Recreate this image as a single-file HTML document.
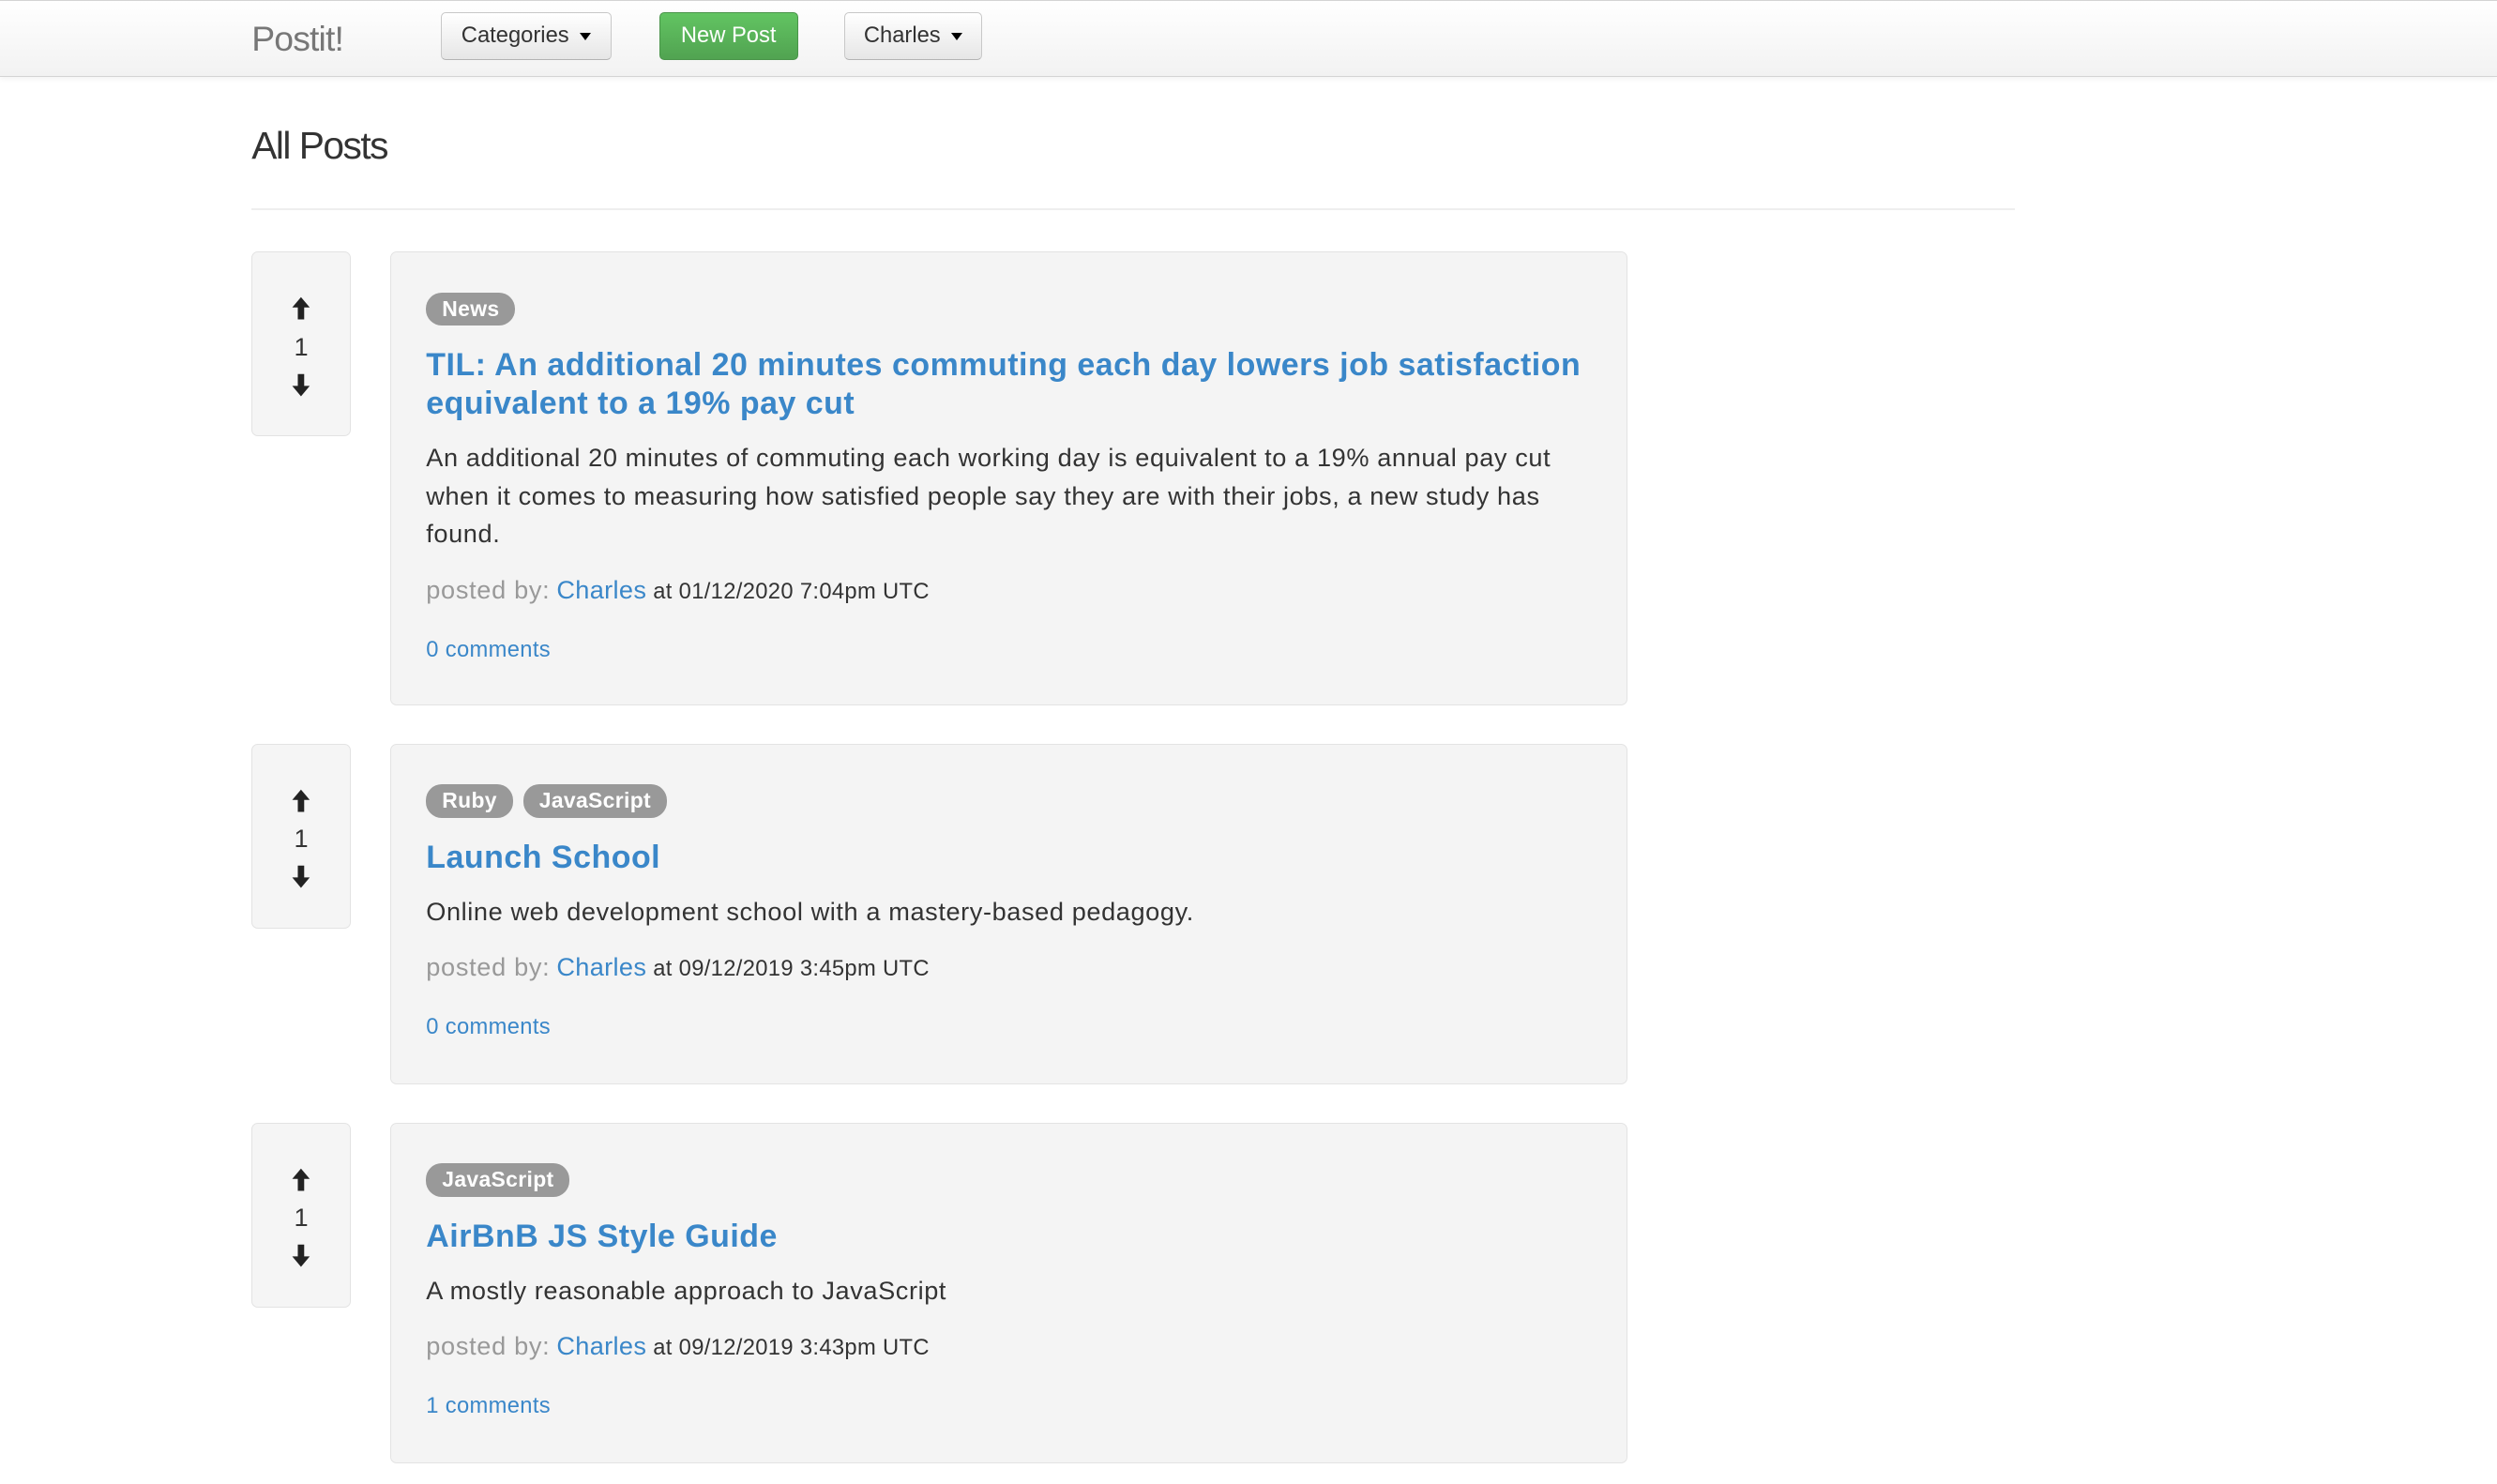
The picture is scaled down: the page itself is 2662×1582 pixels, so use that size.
<!DOCTYPE html>
<html><head><meta charset="utf-8"><style>
html{zoom:1.6977}
body{margin:0;background:#fff;font-family:"Liberation Sans",Arial,sans-serif;color:#333;width:1568px;height:932px;overflow:hidden;position:relative}
.nav{position:absolute;left:0;top:0;width:1568px;height:47px;background:linear-gradient(#fff,#f2f2f2);border-top:1px solid #d4d4d4;border-bottom:1px solid #d4d4d4;box-shadow:0 1px 4px rgba(0,0,0,.07)}
.brand{position:absolute;left:158px;top:11px;font-size:22px;color:#777;letter-spacing:-0.5px}
.btn{position:absolute;top:7px;border:1px solid #c8c8c8;border-bottom-color:#b3b3b3;border-radius:3px;background:linear-gradient(#fff,#e6e6e6);font-size:14px;line-height:28px;text-align:center;color:#333;box-sizing:border-box;height:30px}
.green{background:linear-gradient(#62c462,#51a351);border-color:#4a944a;color:#fff}
.caret{display:inline-block;border-left:4px solid transparent;border-right:4px solid transparent;border-top:5px solid #000;vertical-align:middle;margin-left:3px}
h1{position:absolute;left:158px;top:78px;margin:0;font-size:24px;font-weight:normal;color:#333;letter-spacing:-0.9px}
.hr{position:absolute;left:158px;top:131px;width:1107px;height:1px;background:#eee}
.vote{position:absolute;left:158px;width:61px;height:115px;background:#f5f5f5;border:1px solid #e3e3e3;border-radius:4px;text-align:center}
.vote svg{display:block;margin:0 auto}
.card{position:absolute;left:245px;width:777px;background:#f4f4f4;border:1px solid #e3e3e3;border-radius:4px;box-sizing:border-box;padding:25px 22px 0}
.badge{display:inline-block;background:#999;color:#fff;font-weight:bold;font-size:13.5px;line-height:21px;padding:0 10px;border-radius:10px;margin-right:2px;letter-spacing:.2px}
.title{font-size:20px;font-weight:bold;color:#3a87c9;line-height:24px;margin-top:13px;letter-spacing:.3px}
.body{font-size:16px;line-height:24px;margin-top:10px;letter-spacing:.35px}
.meta{margin-top:11px;font-size:14px;line-height:24px;letter-spacing:.2px}
.meta .g{color:#999;font-size:16px;letter-spacing:.4px}
.meta .l{color:#3a87c9;font-size:16px;letter-spacing:.2px}
.cm{font-size:14px;color:#3a87c9;margin-top:16px;letter-spacing:.2px}
.n{font-size:16px;line-height:16px;margin-top:8px}
</style></head><body>
<div class="nav">
<div class="brand">Postit!</div>
<div class="btn" style="left:277px;width:107px">Categories <span class="caret"></span></div>
<div class="btn green" style="left:414px;width:87px">New Post</div>
<div class="btn" style="left:530px;width:87px">Charles <span class="caret"></span></div>
</div>
<h1>All Posts</h1>
<div class="hr"></div>

<div class="vote" style="top:158px">
<svg width="14" height="16" style="margin-top:27px" viewBox="0 0 14 16"><path d="M7 1L1.5 7.5H5V15H9V7.5H12.5Z" fill="#222"/></svg>
<div class="n">1</div>
<svg width="14" height="16" style="margin-top:8px" viewBox="0 0 14 16"><path d="M7 15L1.5 8.5H5V1H9V8.5H12.5Z" fill="#222"/></svg>
</div>
<div class="card" style="top:158px;height:285px">
<span class="badge">News</span>
<div class="title">TIL: An additional 20 minutes commuting each day lowers job satisfaction equivalent to a 19% pay cut</div>
<div class="body">An additional 20 minutes of commuting each working day is equivalent to a 19% annual pay cut when it comes to measuring how satisfied people say they are with their jobs, a new study has found.</div>
<div class="meta"><span class="g">posted by:</span> <span class="l">Charles</span> at 01/12/2020 7:04pm UTC</div>
<div class="cm">0 comments</div>
</div>

<div class="vote" style="top:467px">
<svg width="14" height="16" style="margin-top:27px" viewBox="0 0 14 16"><path d="M7 1L1.5 7.5H5V15H9V7.5H12.5Z" fill="#222"/></svg>
<div class="n">1</div>
<svg width="14" height="16" style="margin-top:8px" viewBox="0 0 14 16"><path d="M7 15L1.5 8.5H5V1H9V8.5H12.5Z" fill="#222"/></svg>
</div>
<div class="card" style="top:467px;height:214px">
<span class="badge">Ruby</span> <span class="badge">JavaScript</span>
<div class="title">Launch School</div>
<div class="body">Online web development school with a mastery-based pedagogy.</div>
<div class="meta"><span class="g">posted by:</span> <span class="l">Charles</span> at 09/12/2019 3:45pm UTC</div>
<div class="cm">0 comments</div>
</div>

<div class="vote" style="top:705px">
<svg width="14" height="16" style="margin-top:27px" viewBox="0 0 14 16"><path d="M7 1L1.5 7.5H5V15H9V7.5H12.5Z" fill="#222"/></svg>
<div class="n">1</div>
<svg width="14" height="16" style="margin-top:8px" viewBox="0 0 14 16"><path d="M7 15L1.5 8.5H5V1H9V8.5H12.5Z" fill="#222"/></svg>
</div>
<div class="card" style="top:705px;height:214px">
<span class="badge">JavaScript</span>
<div class="title">AirBnB JS Style Guide</div>
<div class="body">A mostly reasonable approach to JavaScript</div>
<div class="meta"><span class="g">posted by:</span> <span class="l">Charles</span> at 09/12/2019 3:43pm UTC</div>
<div class="cm">1 comments</div>
</div>
</body></html>
